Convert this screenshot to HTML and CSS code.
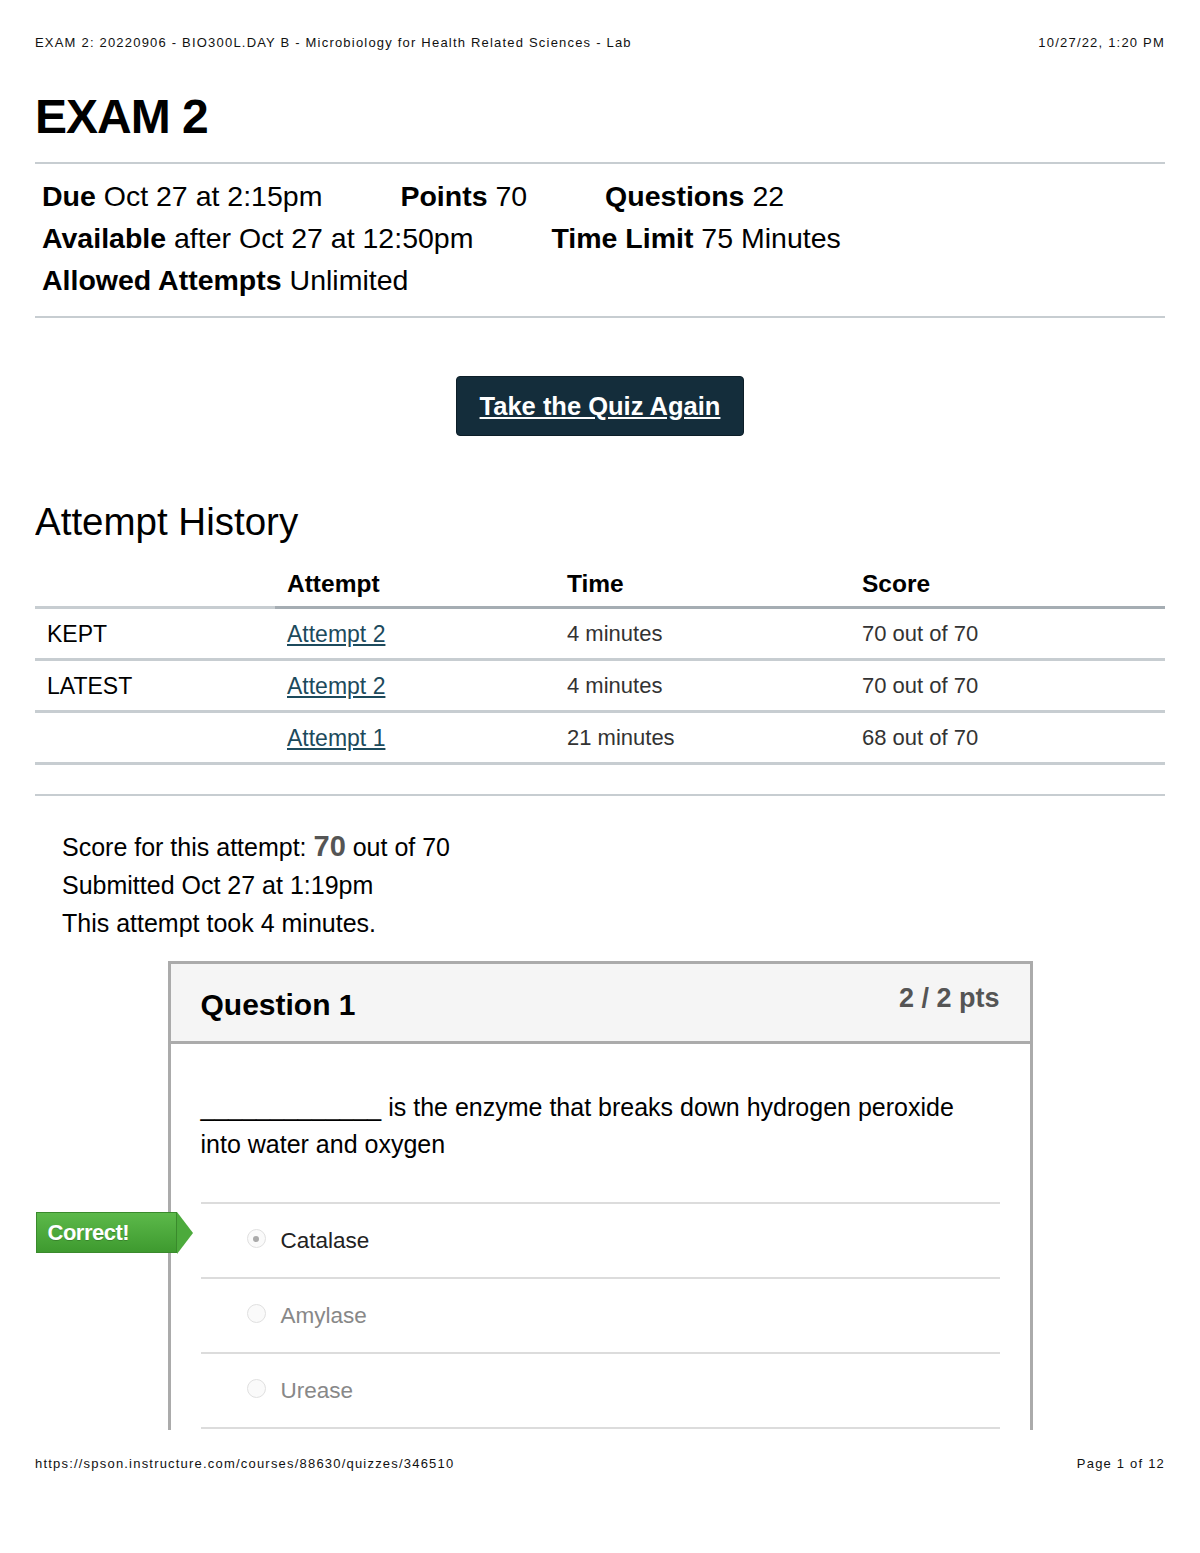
FILE: index.html
```html
<!DOCTYPE html>
<html lang="en">
<head>
<meta charset="utf-8">
<title>EXAM 2</title>
<link rel="stylesheet" href="styles.css">
</head>
<body>
<div class="sheet">
  <div class="runhead">
    <span>EXAM 2: 20220906 - BIO300L.DAY B - Microbiology for Health Related Sciences - Lab</span>
    <span>10/27/22, 1:20 PM</span>
  </div>
  <main class="content">
    <h1 class="title">EXAM 2</h1>
    <div class="details">
      <span class="detail"><b>Due</b> Oct 27 at 2:15pm</span>
      <span class="detail"><b>Points</b> 70</span>
      <span class="detail"><b>Questions</b> 22</span>
      <span class="detail"><b>Available</b> after Oct 27 at 12:50pm</span>
      <span class="detail"><b>Time Limit</b> 75 Minutes</span>
      <span class="detail"><b>Allowed Attempts</b> Unlimited</span>
    </div>
    <div class="btn-row"><a class="btn" href="#">Take the Quiz Again</a></div>
    <h2 class="history-title">Attempt History</h2>
    <table class="history">
      <thead>
        <tr><th class="c1"></th><th class="c2">Attempt</th><th class="c3">Time</th><th class="c4">Score</th></tr>
      </thead>
      <tbody>
        <tr><td class="c1">KEPT</td><td class="c2"><a href="#">Attempt 2 </a></td><td class="c3">4 minutes</td><td class="c4">70 out of 70</td></tr>
        <tr><td class="c1">LATEST</td><td class="c2"><a href="#">Attempt 2 </a></td><td class="c3">4 minutes</td><td class="c4">70 out of 70</td></tr>
        <tr><td class="c1"></td><td class="c2"><a href="#">Attempt 1 </a></td><td class="c3">21 minutes</td><td class="c4">68 out of 70</td></tr>
      </tbody>
    </table>
    <div class="summary">
      <div>Score for this attempt: <span class="big">70</span> out of 70</div>
      <div>Submitted Oct 27 at 1:19pm</div>
      <div>This attempt took 4 minutes.</div>
    </div>
    <section class="question">
      <div class="q-head">
        <span class="q-name">Question 1</span>
        <span class="q-pts">2 / 2 pts</span>
      </div>
      <div class="q-body">
        <p class="q-text">_____________ is the enzyme that breaks down hydrogen peroxide into water and oxygen</p>
        <div class="answers">
          <div class="answer selected">
            <span class="tag">Correct!</span>
            <span class="radio"></span><span class="a-text">Catalase</span>
          </div>
          <div class="answer"><span class="radio"></span><span class="a-text">Amylase</span></div>
          <div class="answer last"><span class="radio"></span><span class="a-text">Urease</span></div>
        </div>
      </div>
    </section>
  </main>
  <div class="runfoot">
    <span>https://spson.instructure.com/courses/88630/quizzes/346510</span>
    <span>Page 1 of 12</span>
  </div>
</div>
</body>
</html>
```

FILE: styles.css
```css
html, body {
  margin: 0;
  padding: 0;
  background: #fff;
}
body {
  font-family: "Liberation Sans", Arial, sans-serif;
  color: #000;
}
.sheet {
  width: 1200px;
  height: 1553px;
  padding: 0 35px;
  box-sizing: border-box;
  display: flex;
  flex-direction: column;
}
.runhead, .runfoot {
  display: flex;
  justify-content: space-between;
  font-size: 13px;
  letter-spacing: 1.2px;
  line-height: 15px;
  color: #111;
}
.runhead {
  padding-top: 35px;
}
.content {
  height: 1380px;
  overflow: hidden;
  flex: none;
}
.runfoot {
  padding-top: 26px;
}
.title {
  margin: 38px 0 0;
  font-size: 48px;
  letter-spacing: -1px;
  line-height: 57px;
  font-weight: bold;
  padding-bottom: 17px;
  border-bottom: 2px solid #c7cdd1;
}
.details {
  display: flex;
  flex-wrap: wrap;
  column-gap: 78px;
  padding: 11px 7px 15px;
  font-size: 28.5px;
  line-height: 42px;
  border-bottom: 2px solid #c7cdd1;
}
.detail b {
  font-weight: bold;
}
.btn-row {
  display: flex;
  justify-content: center;
  margin-top: 58px;
}
.btn {
  display: flex;
  align-items: center;
  justify-content: center;
  height: 60px;
  width: 288px;
  box-sizing: border-box;
  background: #142d3b;
  border: 1px solid #0c1e28;
  border-radius: 4px;
  color: #fff;
  font-size: 25.5px;
  font-weight: bold;
  text-decoration: underline;
}
.history-title {
  margin: 65px 0 0;
  font-size: 38.5px;
  line-height: 42px;
  font-weight: normal;
}
.history {
  margin-top: 19px;
  width: 100%;
  border-collapse: collapse;
  font-size: 24px;
}
.history th {
  text-align: left;
  font-weight: bold;
  font-size: 24.5px;
  line-height: 28px;
  padding: 8px 12px;
  border-bottom: 3px solid #a5adb3;
}
.history th.c1 {
  border-bottom-color: #c7cdd1;
}
.history td {
  line-height: 28px;
  padding: 11px 12px 10px;
  border-bottom: 3px solid #c7cdd1;
  color: #333;
}
.history td.c1 {
  color: #000;
  font-size: 23px;
}
.history td.c3, .history td.c4 {
  font-size: 22px;
}
.history .c1 { width: 216px; }
.history .c2 { width: 256px; }
.history .c3 { width: 271px; }
.history a {
  color: #1c4a5c;
  text-decoration: underline;
  font-size: 23px;
}
.summary {
  margin-top: 29px;
  border-top: 2px solid #c7cdd1;
  padding: 31px 27px 0;
  font-size: 25px;
  line-height: 38px;
}
.big {
  font-size: 29px;
  font-weight: bold;
  color: #555;
}
.question {
  width: 865px;
  margin: 19px auto 0;
  border: 3px solid #ababab;
  box-sizing: border-box;
}
.q-head {
  display: flex;
  justify-content: space-between;
  align-items: flex-start;
  height: 77px;
  padding: 0 30px;
  background: #f5f5f5;
  border-bottom: 3px solid #ababab;
}
.q-name {
  font-size: 30px;
  font-weight: bold;
  line-height: 32px;
  margin-top: 25px;
}
.q-pts {
  font-size: 27px;
  font-weight: bold;
  color: #555;
  line-height: 30px;
  margin-top: 19px;
}
.q-body {
  padding: 45px 30px 0;
}
.q-text {
  margin: 0;
  font-size: 25px;
  line-height: 37px;
}
.answers {
  margin-top: 39px;
  padding-bottom: 40px;
}
.answer {
  position: relative;
  display: flex;
  align-items: center;
  height: 73px;
  border-top: 2px solid #dcdcdc;
  padding-left: 46px;
  font-size: 22.5px;
  color: #888;
}
.answer.last {
  border-bottom: 2px solid #dcdcdc;
}
.answer.selected {
  color: #222;
}
.radio {
  width: 19px;
  height: 19px;
  border-radius: 50%;
  border: 1px solid #e0e0e0;
  box-sizing: border-box;
  margin-right: 15px;
  margin-top: -4px;
  background: #fafafa;
  position: relative;
}
.selected .radio::after {
  content: "";
  position: absolute;
  left: 5.5px;
  top: 5.5px;
  width: 6px;
  height: 6px;
  border-radius: 50%;
  background: #aaa;
}
.tag {
  position: absolute;
  left: -165px;
  top: 8px;
  width: 141px;
  height: 41px;
  box-sizing: border-box;
  padding-left: 11px;
  display: flex;
  align-items: center;
  background: linear-gradient(#5cb94a, #3e9a2f);
  border: 1px solid #3a8a2c;
  color: #fff;
  font-size: 22px;
  font-weight: bold;
  letter-spacing: -0.5px;
  text-shadow: 0 1px 0 rgba(0,0,0,0.2);
}
.tag::after {
  content: "";
  position: absolute;
  right: -17px;
  top: -1px;
  border-top: 21px solid transparent;
  border-bottom: 21px solid transparent;
  border-left: 16px solid #4caa3c;
}
```
